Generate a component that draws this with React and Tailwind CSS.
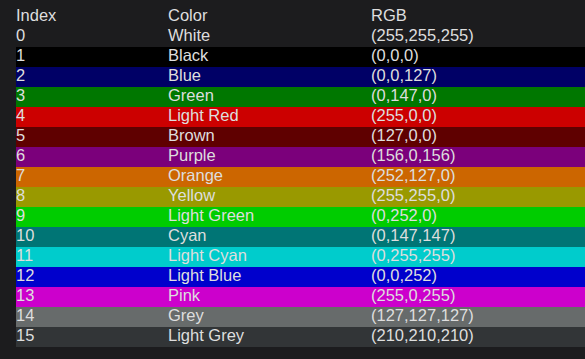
const rows = [
  { i: 0, name: "White", rgb: "(255,255,255)", bg: "bg-transparent" },
  { i: 1, name: "Black", rgb: "(0,0,0)", bg: "bg-[#000000]" },
  { i: 2, name: "Blue", rgb: "(0,0,127)", bg: "bg-[#000066]" },
  { i: 3, name: "Green", rgb: "(0,147,0)", bg: "bg-[#007700]" },
  { i: 4, name: "Light Red", rgb: "(255,0,0)", bg: "bg-[#cc0000]" },
  { i: 5, name: "Brown", rgb: "(127,0,0)", bg: "bg-[#5f0000]" },
  { i: 6, name: "Purple", rgb: "(156,0,156)", bg: "bg-[#7b007b]" },
  { i: 7, name: "Orange", rgb: "(252,127,0)", bg: "bg-[#cc6600]" },
  { i: 8, name: "Yellow", rgb: "(255,255,0)", bg: "bg-[#999900]" },
  { i: 9, name: "Light Green", rgb: "(0,252,0)", bg: "bg-[#00cc00]" },
  { i: 10, name: "Cyan", rgb: "(0,147,147)", bg: "bg-[#007575]" },
  { i: 11, name: "Light Cyan", rgb: "(0,255,255)", bg: "bg-[#00cccc]" },
  { i: 12, name: "Light Blue", rgb: "(0,0,252)", bg: "bg-[#0000cc]" },
  { i: 13, name: "Pink", rgb: "(255,0,255)", bg: "bg-[#cc00cc]" },
  { i: 14, name: "Grey", rgb: "(127,127,127)", bg: "bg-[#676b6b]" },
  { i: 15, name: "Light Grey", rgb: "(210,210,210)", bg: "bg-[#323537]" },
];

function Row({ bg, cells }) {
  return (
    <div className={`grid grid-cols-[152px_203px_203px] h-[20px] leading-[17px] ${bg}`}>
      {cells.map((c, k) => (
        <div key={k}>{c}</div>
      ))}
    </div>
  );
}

export default function App() {
  return (
    <div
      className="w-[585px] h-[359px] bg-[#1c1c1e] text-[#dedede] text-[16.5px] pl-4 pt-[7px]"
      style={{ fontFamily: '"Liberation Sans", Arial, sans-serif' }}
    >
      <Row bg="bg-transparent" cells={["Index", "Color", "RGB"]} />
      {rows.map((r) => (
        <Row key={r.i} bg={r.bg} cells={[r.i, r.name, r.rgb]} />
      ))}
    </div>
  );
}
